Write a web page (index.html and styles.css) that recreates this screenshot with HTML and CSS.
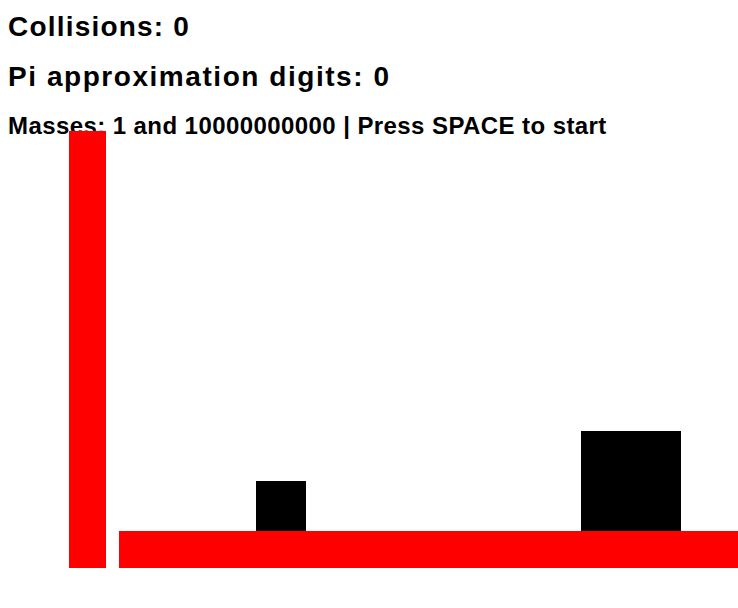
FILE: index.html
```html
<!DOCTYPE html>
<html>
<head>
<meta charset="utf-8">
<link rel="stylesheet" href="styles.css">
</head>
<body>
<div class="page">
  <div class="info">
    <div class="line big l1">Collisions: 0</div>
    <div class="line big l2">Pi approximation digits: 0</div>
    <div class="line small">Masses: 1 and 10000000000 | Press SPACE to start</div>
  </div>
  <div class="scene">
    <div class="wall"></div>
    <div class="floor"></div>
    <div class="block block-small"></div>
    <div class="block block-big"></div>
  </div>
</div>
</body>
</html>
```
FILE: styles.css
```css
html, body {
  margin: 0;
  padding: 0;
  background: #ffffff;
}
.page {
  position: relative;
  width: 738px;
  height: 608px;
  overflow: hidden;
}
.info {
  padding: 2px 0 0 8px;
  font-family: "Liberation Sans", Arial, sans-serif;
  font-weight: bold;
  color: #000;
}
.line {
  white-space: nowrap;
}
.big {
  font-size: 28px;
  line-height: 50px;
}
.l1 { letter-spacing: 1.2px; }
.l2 { letter-spacing: 1.55px; }
.small {
  font-size: 24px;
  line-height: 47px;
  letter-spacing: 0.42px;
}
.scene {
  position: absolute;
  left: 0;
  top: 0;
  width: 738px;
  height: 608px;
}
.wall, .floor, .block {
  position: absolute;
}
.wall {
  left: 69px;
  top: 131px;
  width: 37px;
  height: 437px;
  background: #ff0000;
}
.floor {
  left: 119px;
  top: 531px;
  width: 619px;
  height: 37px;
  background: #ff0000;
}
.block {
  background: #000;
}
.block-small {
  left: 256px;
  top: 481px;
  width: 50px;
  height: 50px;
}
.block-big {
  left: 581px;
  top: 431px;
  width: 100px;
  height: 100px;
}
```
